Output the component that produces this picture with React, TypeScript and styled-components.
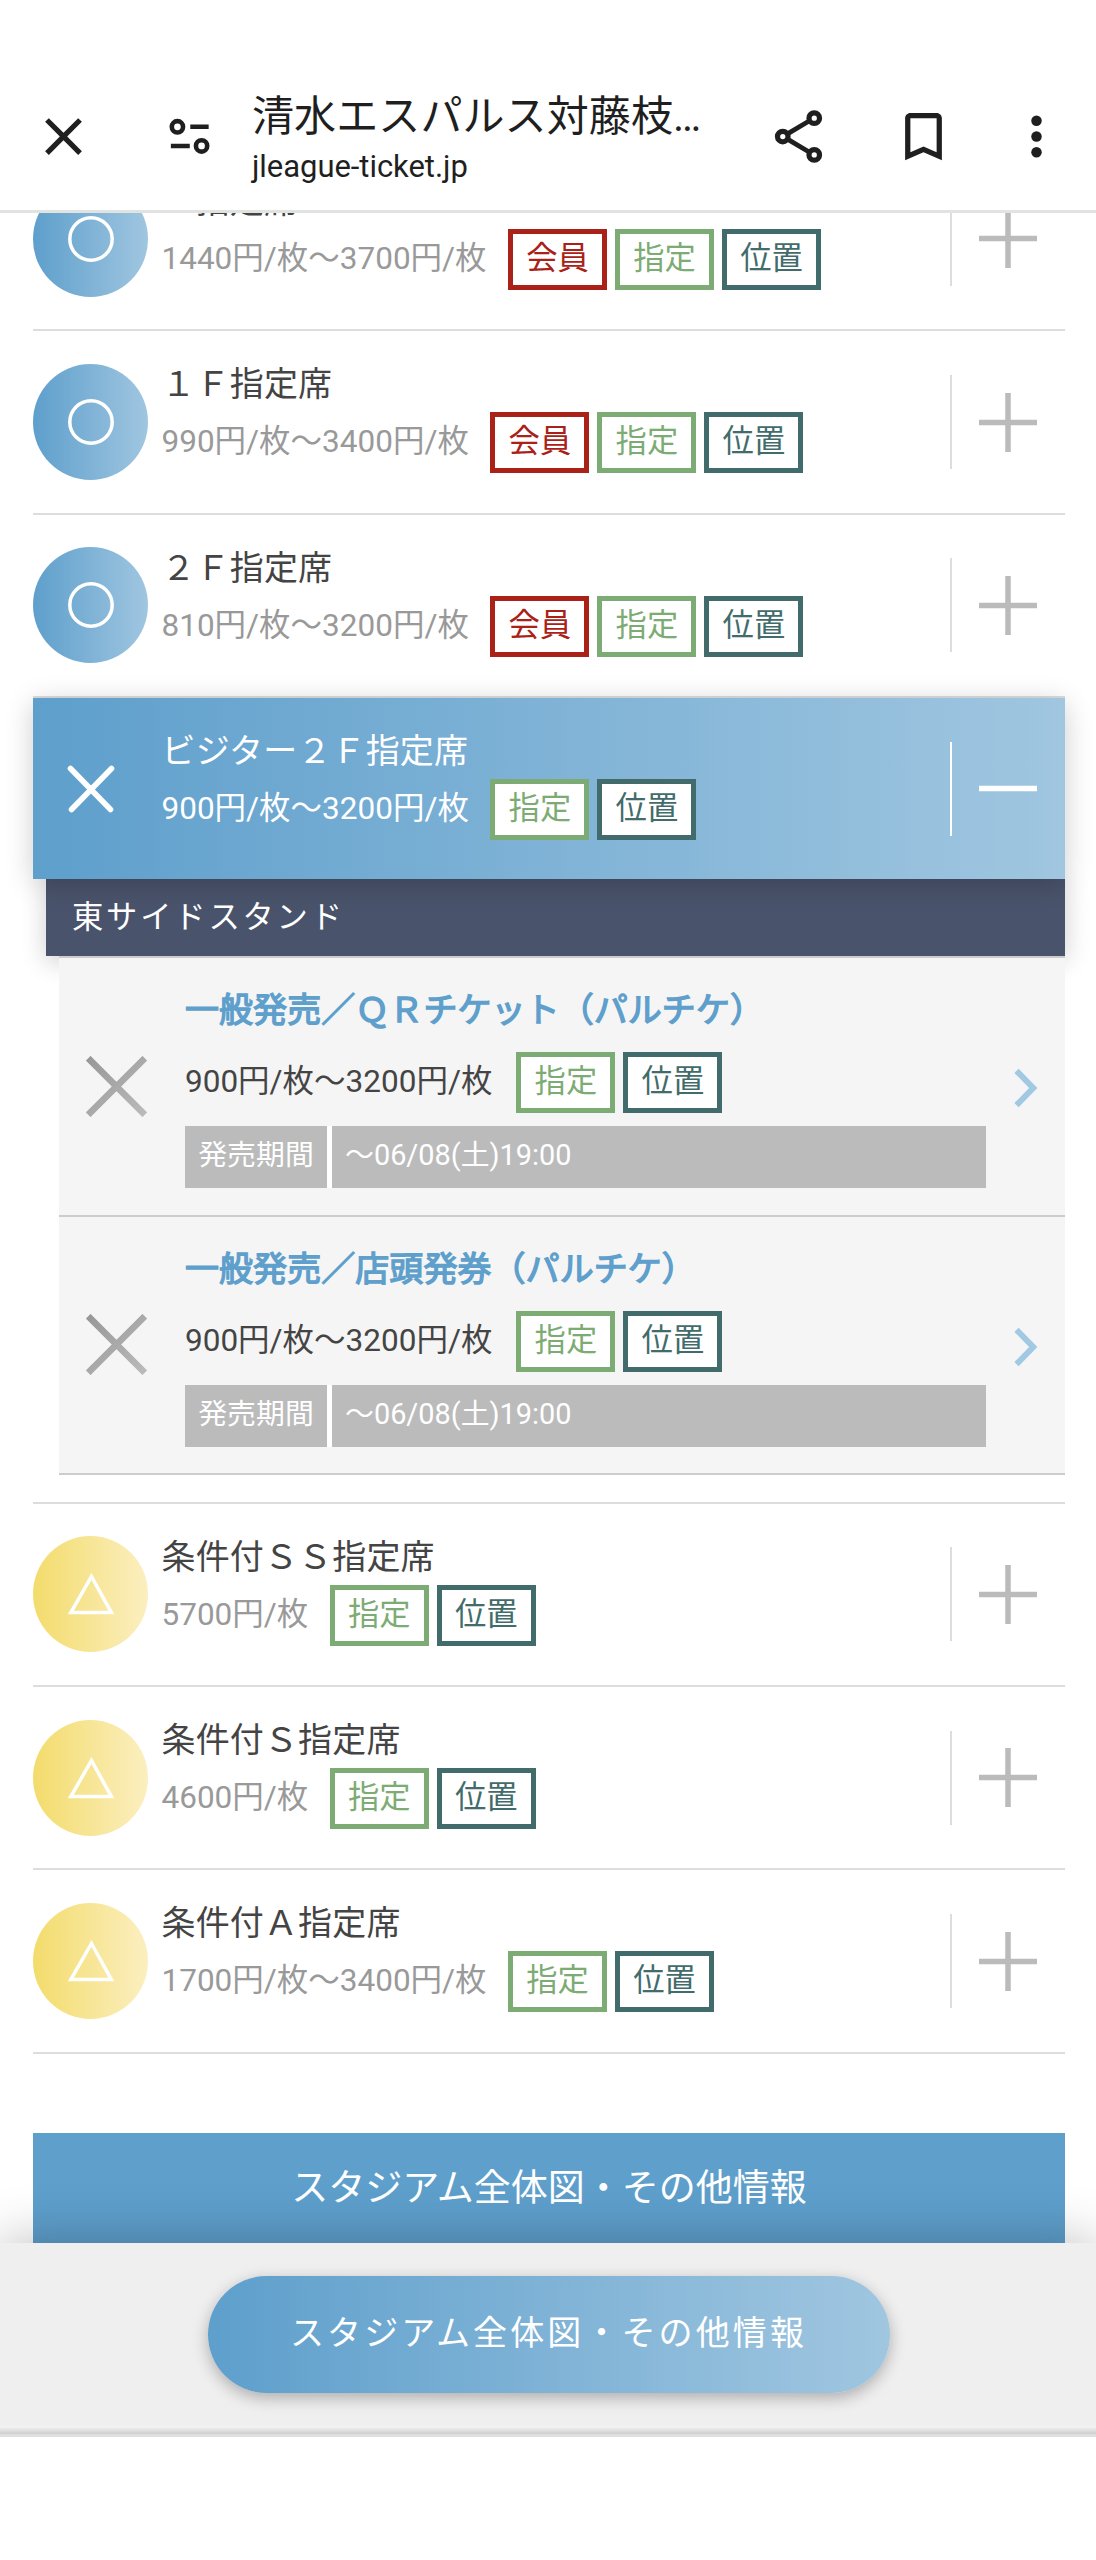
import React from "react";
import styled, { createGlobalStyle } from "styled-components";

const GlobalStyle = createGlobalStyle`
  * { box-sizing: border-box; }
  html, body { margin: 0; padding: 0; background: #fff; }
  body {
    font-family: Roboto, "Noto Sans CJK JP", sans-serif;
    color: #444;
    -webkit-text-size-adjust: none;
  }
`;

const blue = "#5e9fcc";
const blueGradient = "linear-gradient(90deg, #5e9fcc, #a0c6e0)";
const yellowGradient = "linear-gradient(90deg, #f3dc6c, #fbefc0)";

const Screen = styled.div`
  display: flex;
  flex-direction: column;
  width: 1096px;
  height: 2560px;
  overflow: hidden;
  background: #fff;
`;

/* ---------- browser toolbar ---------- */

const Toolbar = styled.header`
  flex: none;
  display: flex;
  align-items: center;
  height: 213px;
  padding: 63px 20px 0 32px;
  border-bottom: 3px solid #e1e3e0;
  color: #1f1f1f;
`;

const ToolIcon = styled.svg`
  flex: none;
  width: 63px;
  height: 63px;
  fill: currentColor;
`;

const SiteInfoIcon = styled(ToolIcon)`
  margin-left: 63px;
`;

const PageInfo = styled.div`
  width: 492px;
  margin-left: 31px;
  padding-top: 6px;
  display: flex;
  flex-direction: column;
`;

const PageTitle = styled.div`
  height: 52px;
  line-height: 52px;
  font-size: 42px;
  letter-spacing: 0.1px;
  white-space: nowrap;
`;

const PageUrl = styled.div`
  height: 46px;
  line-height: 48px;
  font-size: 31px;
  letter-spacing: -0.05px;
`;

const Actions = styled.div`
  display: flex;
  align-items: center;
  margin-left: 23px;
`;

const BookmarkIcon = styled(ToolIcon)`
  margin-left: 61.5px;
`;

const MenuIcon = styled(ToolIcon)`
  margin-left: 50px;
`;

/* ---------- seat list ---------- */

const Viewport = styled.main`
  flex: none;
  height: 2030px;
  padding: 0 31px 0 33px;
  overflow: hidden;
`;

const SeatList = styled.div`
  margin-top: -64.9px;
`;

const Row = styled.div<{ $open?: boolean }>`
  position: relative;
  z-index: ${(p) => (p.$open ? 1 : 0)};
  display: flex;
  align-items: flex-start;
  height: ${(p) => (p.$open ? "181px" : "183.3px")};
  border-bottom: ${(p) => (p.$open ? "none" : "2px solid #ddd")};
  background: ${(p) => (p.$open ? blueGradient : "none")};
  box-shadow: ${(p) => (p.$open ? "0 5px 26px rgba(0, 0, 0, 0.2)" : "none")};
  color: ${(p) => (p.$open ? "#fff" : "#444")};
`;

const StatusBadge = styled.div<{ $fill: string }>`
  flex: none;
  align-self: center;
  display: flex;
  align-items: center;
  justify-content: center;
  width: 115px;
  height: 116px;
  border-radius: 50%;
  background: ${(p) => p.$fill};
`;

const StatusMark = styled.svg`
  width: 46px;
  height: 46px;
  overflow: visible;
  fill: none;
  stroke: #fff;
`;

const Info = styled.div`
  flex: 1;
  padding: 28px 0 0 13.5px;
`;

const SeatName = styled.div`
  height: 50px;
  margin-bottom: 3px;
  line-height: 50px;
  font-size: 34px;
  letter-spacing: 0.15px;
  white-space: nowrap;
`;

const PriceLine = styled.div`
  display: flex;
  align-items: center;
  height: 61px;
`;

const Price = styled.span<{ $color: string; $gap: number }>`
  height: 61px;
  margin-right: ${(p) => p.$gap}px;
  color: ${(p) => p.$color};
  font-size: 31.5px;
  line-height: 59px;
  white-space: nowrap;
`;

const Tags = styled.div`
  display: flex;
  gap: 8px;
`;

const Tag = styled.span<{ $color: string }>`
  display: flex;
  align-items: center;
  justify-content: center;
  width: 99px;
  height: 61px;
  padding-bottom: 1px;
  border: 5px solid ${(p) => p.$color};
  background: #fff;
  color: ${(p) => p.$color};
  font-size: 31.3px;
  line-height: 48px;
`;

const Toggle = styled.div<{ $color: string; $line: string }>`
  align-self: center;
  display: flex;
  align-items: center;
  justify-content: center;
  width: 115px;
  height: 94px;
  padding-right: 2px;
  border-left: 2px solid ${(p) => p.$line};
  color: ${(p) => p.$color};
`;

const ToggleMark = styled.svg`
  width: 58px;
  height: 59px;
  fill: none;
  stroke: currentColor;
  stroke-width: 5.5;
`;

/* ---------- expanded stand ---------- */

const StandHeading = styled.h2`
  margin: 0 0 0 13px;
  height: 77px;
  padding-left: 26px;
  background: #49536b;
  box-shadow: 0 5px 26px rgba(0, 0, 0, 0.2);
  color: #fff;
  font-size: 31.3px;
  font-weight: 400;
  line-height: 77px;
  letter-spacing: 2.8px;
`;

const SaleList = styled.div`
  position: relative;
  margin: 0 0 26.6px 26px;
  border-top: 2px solid #ccc;
  background: #f5f5f5;
`;

const Sale = styled.div`
  display: flex;
  height: 258.6px;
  border-bottom: 2px solid #ccc;
`;

const SaleStatus = styled.svg`
  flex: none;
  align-self: center;
  width: 61px;
  height: 61px;
  margin-left: 27px;
  fill: none;
  stroke-width: 6.6;
`;

const SaleBody = styled.div`
  width: 801px;
  margin-left: 38px;
  padding-top: 27px;
`;

const SaleName = styled.div`
  height: 50px;
  margin-bottom: 17px;
  line-height: 50px;
  color: ${blue};
  font-size: 34px;
  -webkit-text-stroke: 1.4px ${blue};
  letter-spacing: 0.06px;
  white-space: nowrap;
`;

const Period = styled.dl`
  display: flex;
  gap: 5px;
  height: 62px;
  margin: 13px 0 0;
  background: #fff;
  color: #fff;
  font-size: 28.9px;
  line-height: 59px;
`;

const PeriodLabel = styled.dt`
  width: 142px;
  background: #bbb;
  text-align: center;
`;

const PeriodValue = styled.dd`
  flex: 1;
  margin: 0;
  padding-left: 13px;
  background: #bbb;
`;

const Chevron = styled.svg`
  align-self: center;
  width: 24px;
  height: 40px;
  margin: 4px 0 0 28px;
  fill: none;
  stroke: #a1c9e4;
  stroke-width: 6;
`;

const LowerRows = styled.div`
  border-top: 2px solid #ddd;
`;

const StadiumButton = styled.button`
  display: block;
  width: 100%;
  height: 116px;
  margin-top: 79px;
  padding: 0 0 11px;
  border: 0;
  background: ${blue};
  color: #fff;
  font: inherit;
  font-size: 37px;
`;

/* ---------- fixed footer ---------- */

const Footer = styled.footer`
  position: relative;
  z-index: 2;
  flex: none;
  display: flex;
  justify-content: center;
  align-items: flex-start;
  height: 183px;
  padding-top: 33px;
  background: #efefef;
  box-shadow: 0 0 52px rgba(0, 0, 0, 0.28);
`;

const PillButton = styled.button`
  width: 682px;
  height: 117px;
  margin-left: 2px;
  padding: 0 1px 8px 0;
  border: 0;
  border-radius: 59px;
  background: ${blueGradient};
  box-shadow: 0 5px 16px rgba(0, 0, 0, 0.28);
  color: #fff;
  font: inherit;
  font-size: 34px;
  letter-spacing: 3.1px;
`;

const BottomShade = styled.div`
  position: relative;
  z-index: 3;
  flex: none;
  height: 11px;
  border-bottom: 3px solid #dfdfdf;
  background: linear-gradient(#f6f6f6, #cdcdcd);
`;

const BottomInset = styled.div`
  position: relative;
  z-index: 3;
  flex: 1;
  background: #fff;
`;

type TagKind = "member" | "reserved" | "position";

const tagStyles: Record<TagKind, { label: string; color: string }> = {
  member: { label: "会員", color: "#a92117" },
  reserved: { label: "指定", color: "#7cab74" },
  position: { label: "位置", color: "#426c6b" },
};

const TagGroup = ({ kinds }: { kinds: TagKind[] }) => (
  <Tags>
    {kinds.map((kind) => (
      <Tag key={kind} $color={tagStyles[kind].color}>
        {tagStyles[kind].label}
      </Tag>
    ))}
  </Tags>
);

type Status = "available" | "few" | "closed";

const fills: Record<Status, string> = {
  available: blueGradient,
  few: yellowGradient,
  closed: "none",
};

const Mark = ({ status }: { status: Status }) => (
  <StatusMark viewBox="0 0 46 46">
    {status === "available" && <circle cx="23" cy="23" r="21.2" strokeWidth="3.5" />}
    {status === "few" && <path d="M23.5 5.5L43.4 41.6H2.8Z" strokeWidth="3.5" />}
    {status === "closed" && (
      <path d="M2.5 2.5L42.5 43.5M43.5 2.5L3.5 43.5" strokeWidth="5.6" strokeLinecap="round" />
    )}
  </StatusMark>
);

interface SeatProps {
  name: string;
  price: string;
  tags: TagKind[];
  status: Status;
  open?: boolean;
}

const Seat = ({ name, price, tags, status, open }: SeatProps) => (
  <Row $open={open}>
    <StatusBadge $fill={fills[status]}>
      <Mark status={status} />
    </StatusBadge>
    <Info>
      <SeatName>{name}</SeatName>
      <PriceLine>
        <Price $color={open ? "#fff" : "#999"} $gap={21.5}>
          {price}
        </Price>
        <TagGroup kinds={tags} />
      </PriceLine>
    </Info>
    <Toggle $color={open ? "#fff" : "#bbb"} $line={open ? "#fff" : "#ddd"}>
      <ToggleMark viewBox="0 0 58 59">
        <path d={open ? "M0 29.5H58" : "M0 29.5H58M29 0V59"} />
      </ToggleMark>
    </Toggle>
  </Row>
);

const SaleItem = ({ name, id }: { name: string; id: string }) => (
  <Sale>
    <SaleStatus viewBox="0 0 61 61">
      <defs>
        <linearGradient id={id} gradientUnits="userSpaceOnUse" x1="0" y1="0" x2="61" y2="61">
          <stop offset="0" stopColor="#969696" />
          <stop offset="1" stopColor="#bcbcbc" />
        </linearGradient>
      </defs>
      <path d="M2.2 2.2L58.8 58.8M58.8 2.2L2.2 58.8" stroke={`url(#${id})`} />
    </SaleStatus>
    <SaleBody>
      <SaleName>{name}</SaleName>
      <PriceLine>
        <Price $color="#444" $gap={24}>
          900円/枚〜3200円/枚
        </Price>
        <TagGroup kinds={["reserved", "position"]} />
      </PriceLine>
      <Period>
        <PeriodLabel>発売期間</PeriodLabel>
        <PeriodValue>〜06/08(土)19:00</PeriodValue>
      </Period>
    </SaleBody>
    <Chevron viewBox="0 0 24 40">
      <path d="M2.5 2.8L19.2 20L2.5 37.2" />
    </Chevron>
  </Sale>
);

const upperSeats: SeatProps[] = [
  { name: "Ｓ指定席", price: "1440円/枚〜3700円/枚", tags: ["member", "reserved", "position"], status: "available" },
  { name: "１Ｆ指定席", price: "990円/枚〜3400円/枚", tags: ["member", "reserved", "position"], status: "available" },
  { name: "２Ｆ指定席", price: "810円/枚〜3200円/枚", tags: ["member", "reserved", "position"], status: "available" },
];

const lowerSeats: SeatProps[] = [
  { name: "条件付ＳＳ指定席", price: "5700円/枚", tags: ["reserved", "position"], status: "few" },
  { name: "条件付Ｓ指定席", price: "4600円/枚", tags: ["reserved", "position"], status: "few" },
  { name: "条件付Ａ指定席", price: "1700円/枚〜3400円/枚", tags: ["reserved", "position"], status: "few" },
];

export default function App() {
  return (
    <Screen lang="ja">
      <GlobalStyle />
      <Toolbar>
        <ToolIcon viewBox="0 0 24 24">
          <path d="M19 6.41L17.59 5 12 10.59 6.41 5 5 6.41 10.59 12 5 17.59 6.41 19 12 13.41 17.59 19 19 17.59 13.41 12z" />
        </ToolIcon>
        <SiteInfoIcon viewBox="0 0 24 24">
          <g fill="none" stroke="currentColor" strokeWidth="1.75">
            <circle cx="7.4" cy="8.3" r="2.15" />
            <circle cx="16.6" cy="15.6" r="2.15" />
            <path d="M12.3 8.3H19.3M4.9 15.6H12.1" />
          </g>
        </SiteInfoIcon>
        <PageInfo>
          <PageTitle>清水エスパルス対藤枝…</PageTitle>
          <PageUrl>jleague-ticket.jp</PageUrl>
        </PageInfo>
        <Actions>
          <ToolIcon viewBox="0 0 24 24">
            <g fill="none" stroke="currentColor" strokeWidth="2">
              <circle cx="18" cy="5" r="2" />
              <circle cx="6" cy="12" r="2" />
              <circle cx="18" cy="19" r="2" />
              <path d="M7.8 11L16.2 6M7.8 13L16.2 18" strokeWidth="1.8" />
            </g>
          </ToolIcon>
          <BookmarkIcon viewBox="0 0 24 24">
            <path d="M17 3H7c-1.1 0-2 .9-2 2v16l7-3 7 3V5c0-1.1-.9-2-2-2zm0 15l-5-2.18L7 18V5h10v13z" />
          </BookmarkIcon>
          <MenuIcon viewBox="0 0 24 24">
            <circle cx="12" cy="6" r="2" />
            <circle cx="12" cy="12" r="2" />
            <circle cx="12" cy="18" r="2" />
          </MenuIcon>
        </Actions>
      </Toolbar>

      <Viewport>
        <SeatList>
          {upperSeats.map((seat) => (
            <Seat key={seat.name} {...seat} />
          ))}
          <Seat
            name="ビジター２Ｆ指定席"
            price="900円/枚〜3200円/枚"
            tags={["reserved", "position"]}
            status="closed"
            open
          />
          <StandHeading>東サイドスタンド</StandHeading>
          <SaleList>
            <SaleItem id="sale-qr" name="一般発売／ＱＲチケット（パルチケ）" />
            <SaleItem id="sale-store" name="一般発売／店頭発券（パルチケ）" />
          </SaleList>
          <LowerRows>
            {lowerSeats.map((seat) => (
              <Seat key={seat.name} {...seat} />
            ))}
          </LowerRows>
          <StadiumButton>スタジアム全体図・その他情報</StadiumButton>
        </SeatList>
      </Viewport>

      <Footer>
        <PillButton>スタジアム全体図・その他情報</PillButton>
      </Footer>
      <BottomShade />
      <BottomInset />
    </Screen>
  );
}
